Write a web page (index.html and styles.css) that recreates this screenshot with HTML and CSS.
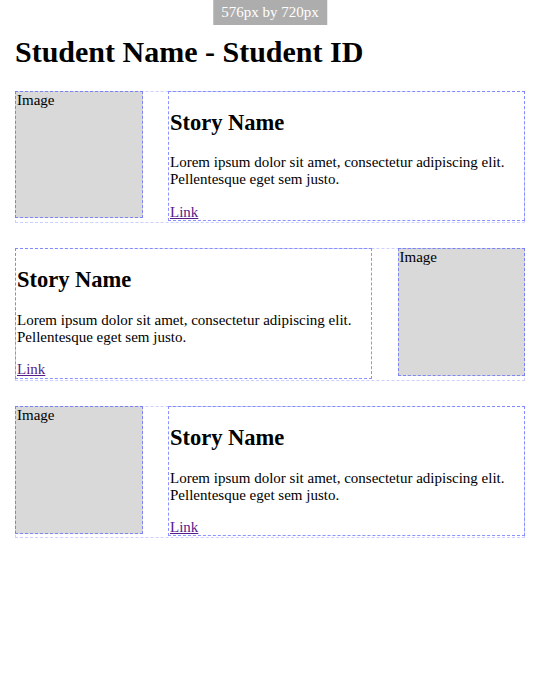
FILE: index.html
```html
<!DOCTYPE html>
<html lang="en">
<head>
<meta charset="utf-8">
<title>Student Name - Student ID</title>
<link rel="stylesheet" href="styles.css">
</head>
<body>
<div class="badge">576px by 720px</div>
<h1>Student Name - Student ID</h1>

<section class="story">
  <div class="image">Image</div>
  <div class="text">
    <h2>Story Name</h2>
    <p>Lorem ipsum dolor sit amet, consectetur adipiscing elit. Pellentesque eget sem justo.</p>
    <a href="#">Link</a>
  </div>
</section>

<section class="story">
  <div class="text">
    <h2>Story Name</h2>
    <p>Lorem ipsum dolor sit amet, consectetur adipiscing elit. Pellentesque eget sem justo.</p>
    <a href="#">Link</a>
  </div>
  <div class="image">Image</div>
</section>

<section class="story">
  <div class="image">Image</div>
  <div class="text">
    <h2>Story Name</h2>
    <p>Lorem ipsum dolor sit amet, consectetur adipiscing elit. Pellentesque eget sem justo.</p>
    <a href="#">Link</a>
  </div>
</section>
</body>
</html>
```
FILE: styles.css
```css
body {
  margin: 15px;
  font-family: "Liberation Serif", "Times New Roman", serif;
  font-size: 15px;
  line-height: 1.15;
  color: #000;
  background: #fff;
}

.badge {
  position: absolute;
  top: 0;
  left: 50%;
  transform: translateX(-50%);
  background: #adadad;
  color: #fff;
  padding: 3px 8px 4px;
  font-family: "Liberation Serif", "Times New Roman", serif;
  font-size: 15px;
  line-height: 18px;
  white-space: nowrap;
}

h1 {
  font-size: 30px;
  margin: 20px 0 21px;
}

.story {
  display: flex;
  justify-content: space-between;
  align-items: flex-start;
  padding-bottom: 2px;
  margin-bottom: 25.5px;
  outline: 1px dashed rgba(110, 120, 255, 0.35);
  outline-offset: -1px;
}

.image {
  width: 25%;
  aspect-ratio: 1 / 1;
  background: #d9d9d9;
  padding: 1px 0 0 2px;
  box-sizing: border-box;
  outline: 1px dashed rgba(90, 100, 255, 0.7);
  outline-offset: -1px;
}

.text {
  width: 70%;
  padding-left: 2px;
  box-sizing: border-box;
  outline: 1px dashed rgba(90, 100, 255, 0.7);
  outline-offset: -1px;
}

.text h2 {
  font-size: 22.5px;
  margin: 19px 0 18.7px;
}

.text p {
  margin: 15px 0;
}

.text a {
  color: #551a8b;
}
```
